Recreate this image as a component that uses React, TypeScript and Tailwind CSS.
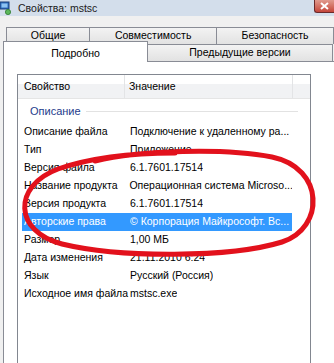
import React from "react";

const rows = [
	{ name: "Описание файла", value: "Подключение к удаленному ра..." },
	{ name: "Тип", value: "Приложение" },
	{ name: "Версия файла", value: "6.1.7601.17514" },
	{ name: "Название продукта", value: "Операционная система Microso..." },
	{ name: "Версия продукта", value: "6.1.7601.17514" },
	{ name: "Авторские права", value: "© Корпорация Майкрософт. Вс...", selected: true },
	{ name: "Размер", value: "1,00 МБ" },
	{ name: "Дата изменения", value: "21.11.2010 6:24" },
	{ name: "Язык", value: "Русский (Россия)" },
	{ name: "Исходное имя файла", value: "mstsc.exe" },
];

function TitleIcon() {
	return (
		<svg width="12" height="14" viewBox="0 0 12 14" className="shrink-0">
			<rect x="0" y="1" width="9" height="7" fill="#2f6fc0" stroke="#1d3f78" strokeWidth="1" />
			<rect x="1.5" y="2.5" width="6" height="4" fill="#8ec3f2" />
			<circle cx="8" cy="11" r="2.6" fill="#5cb85c" stroke="#2f7a2f" strokeWidth="0.8" />
		</svg>
	);
}

const tabBg = "bg-gradient-to-b from-[#f3f3f3] to-[#e2e2e2]";

export default function App() {
	return (
		<div
			className="w-[334px] h-[363px] overflow-hidden bg-[#f0f0f0] text-[10.5px] text-black"
			style={{ fontFamily: '"Liberation Sans", Arial, sans-serif' }}
		>
			{/* title bar */}
			<div className="h-[16px] flex items-center bg-[#d3deeb]">
				<div className="w-[18px]">
					<TitleIcon />
				</div>
				<div className="text-[10.5px] leading-none text-[#1b1b1b]">Свойства: mstsc</div>
				<div className="ml-auto self-start h-[13px] w-[20px] rounded-bl-[3px] border border-t-0 border-r-0 border-[#6b2a2a] bg-gradient-to-b from-[#e09a8e] to-[#c4453a] flex items-center justify-center">
					<svg width="9" height="8" viewBox="0 0 9 8">
						<path d="M1 1 L8 7 M8 1 L1 7" stroke="#fff" strokeWidth="2" />
					</svg>
				</div>
			</div>

			{/* tabs */}
			<div className="h-[11px]" />
			<div className="relative h-[34px]">
				<div className="flex pl-[6px] h-[17px]">
					<div className={`w-[85px] border border-b-0 border-[#898c95] ${tabBg} flex justify-center items-center`}>Общие</div>
					<div className={`w-[128px] border border-b-0 border-l-0 border-[#898c95] ${tabBg} flex justify-center items-center`}>Совместимость</div>
					<div className={`w-[118px] border border-b-0 border-l-0 border-[#898c95] ${tabBg} flex justify-center items-center`}>Безопасность</div>
				</div>
				<div className="absolute left-0 top-[14px] right-0 flex items-start h-[21px]">
					<div className="ml-[3px] w-[145px] h-[21px] border border-b-0 border-[#898c95] bg-white flex justify-center items-start pt-[4px] z-10">
						Подробно
					</div>
					<div className={`mt-[3px] w-[185px] h-[17px] border border-l-0 border-b-0 border-[#898c95] ${tabBg} flex justify-center items-center`}>
						Предыдущие версии
					</div>
				</div>
			</div>

			{/* panel */}
			<div className="relative ml-[3px] h-[315px] border-l border-t border-[#898c95] bg-white pt-[12px] pl-[13px]">
				<div className="w-[294px] h-[300px] border border-b-0 border-[#828790] bg-white">
					<div className="flex h-[24px] bg-gradient-to-b from-white from-40% to-[#f1f2f4] to-40% border-b border-[#e5e5e5]">
						<div className="w-[107px] pl-[6px] flex items-center border-r border-[#e3e4e6]">Свойство</div>
						<div className="w-[168px] pl-[4px] flex items-center border-r border-[#e3e4e6]">Значение</div>
					</div>
					<div className="flex items-center h-[24px] pl-[12px] pr-[12px]">
						<span className="text-[#1e3c8c] text-[11px]">Описание</span>
						<div className="flex-1 ml-[5px] h-px bg-[#e2e2e2]" />
					</div>
					{rows.map((r) => (
						<div
							key={r.name}
							className={`flex h-[18px] items-center mx-[4px] w-[270px] ${r.selected ? "bg-[#3399ff] text-white" : ""}`}
						>
							<div className="w-[108px] pl-[2px] whitespace-nowrap overflow-hidden">{r.name}</div>
							<div className="whitespace-nowrap overflow-hidden">{r.value}</div>
						</div>
					))}
				</div>

				{/* red hand-drawn ellipse */}
				<svg className="absolute left-0 top-0 pointer-events-none" width="330" height="301" viewBox="4 62 330 301">
					<path
						d="M95 161 C 140 150, 225 148, 272 157 C 325 168, 325 228, 282 242 C 230 258, 120 258, 62 244 C 14 232, 12 186, 58 169 C 90 158, 130 153, 175 153"
						fill="none"
						stroke="#e2111c"
						strokeWidth="5"
						strokeLinecap="round"
					/>
				</svg>
			</div>
		</div>
	);
}
